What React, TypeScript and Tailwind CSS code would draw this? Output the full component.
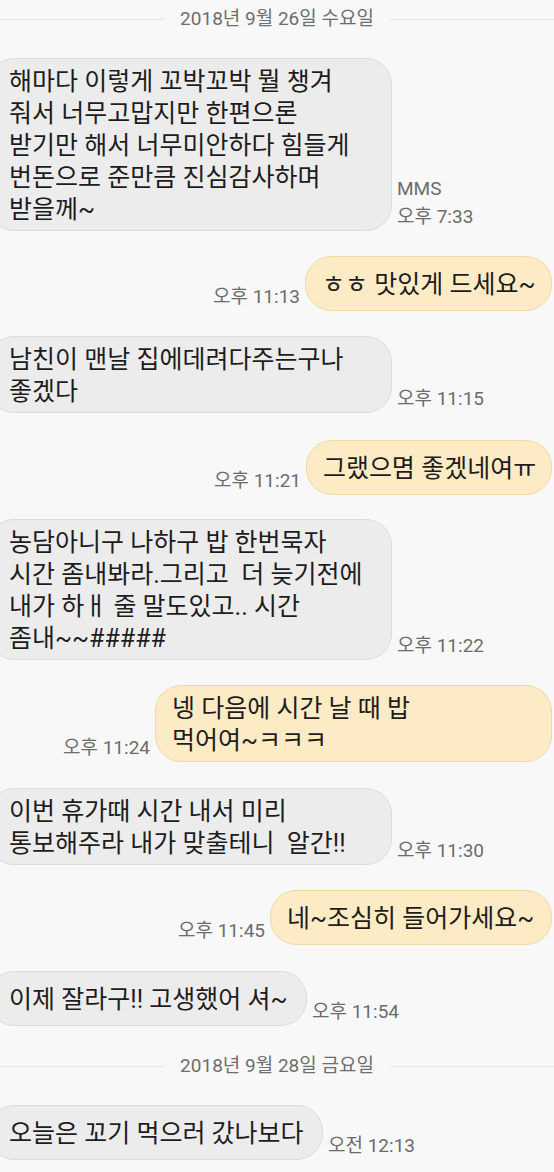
import React from "react";

const FONT = { fontFamily: "Roboto, 'Noto Sans CJK KR', sans-serif" };

interface DateLineProps {
  label: string;
  className: string;
}

const DateLine: React.FC<DateLineProps> = ({ label, className }) => (
  <div className={`flex h-[38px] items-center gap-[16px] ${className}`}>
    <div className="h-px flex-1 bg-[#e4e4e4]"></div>
    <span className="text-[19px] leading-[38px] text-[#6e6e6e]">{label}</span>
    <div className="h-px flex-1 bg-[#e4e4e4]"></div>
  </div>
);

interface BubbleProps {
  lines: string[];
  meta: string[];
  className: string;
  width: string;
}

const Received: React.FC<BubbleProps> = ({ lines, meta, className, width }) => (
  <div className={`flex items-end ${className}`}>
    <div
      className={`-ml-[12px] flex min-h-[55px] flex-col justify-center rounded-[26px] border border-[#dcdcdc] bg-[#ececec] pl-[20px] pr-3 pt-[7px] pb-[4px] ${width}`}
    >
      {lines.map((line) => (
        <div key={line} className="whitespace-pre text-[25px] leading-[32px] text-[#1d1d1d]">
          {line}
        </div>
      ))}
    </div>
    <div className="ml-[5px] flex flex-col">
      {meta.map((item) => (
        <span key={item} className="whitespace-nowrap text-[19px] leading-[28px] text-[#6c6c6c]">
          {item}
        </span>
      ))}
    </div>
  </div>
);

const Sent: React.FC<BubbleProps> = ({ lines, meta, className, width }) => (
  <div className={`flex items-end justify-end ${className}`}>
    <div className="mr-[5px] flex flex-col">
      {meta.map((item) => (
        <span key={item} className="whitespace-nowrap text-[19px] leading-[28px] text-[#6c6c6c]">
          {item}
        </span>
      ))}
    </div>
    <div
      className={`mr-[2px] flex min-h-[55px] flex-col justify-center rounded-[26px] border border-[#efd9a7] bg-[#fdebc5] pl-[16px] pr-3 pt-[7px] pb-[4px] ${width}`}
    >
      {lines.map((line) => (
        <div key={line} className="whitespace-pre text-[25px] leading-[32px] text-[#1d1d1d]">
          {line}
        </div>
      ))}
    </div>
  </div>
);

export default function App() {
  return (
    <div className="min-h-[1172px] w-full overflow-hidden bg-[#f8f8f8]" style={FONT}>
      <DateLine label="2018년 9월 26일 수요일" className="" />

      <Received
        className="mt-[20px]"
        width="w-[404px]"
        lines={[
          "해마다 이렇게 꼬박꼬박 뭘 챙겨",
          "줘서 너무고맙지만 한편으론",
          "받기만 해서 너무미안하다 힘들게",
          "번돈으로 준만큼 진심감사하며",
          "받을께~",
        ]}
        meta={["MMS", "오후 7:33"]}
      />

      <Sent
        className="mt-[25px]"
        width="w-[247px]"
        lines={["ㅎㅎ 맛있게 드세요~"]}
        meta={["오후 11:13"]}
      />

      <Received
        className="mt-[25px]"
        width="w-[404px]"
        lines={["남친이 맨날 집에데려다주는구나", "좋겠다"]}
        meta={["오후 11:15"]}
      />

      <Sent
        className="mt-[27px]"
        width="w-[246px]"
        lines={["그랬으몀 좋겠네여ㅠ"]}
        meta={["오후 11:21"]}
      />

      <Received
        className="mt-[24px]"
        width="w-[404px]"
        lines={[
          "농담아니구 나하구 밥 한번묵자",
          "시간 좀내봐라.그리고  더 늦기전에",
          "내가 하ㅐ 줄 말도있고.. 시간",
          "좀내~~#####",
        ]}
        meta={["오후 11:22"]}
      />

      <Sent
        className="mt-[25px]"
        width="w-[397px]"
        lines={["넹 다음에 시간 날 때 밥", "먹어여~ㅋㅋㅋ"]}
        meta={["오후 11:24"]}
      />

      <Received
        className="mt-[26px]"
        width="w-[404px]"
        lines={["이번 휴가때 시간 내서 미리", "통보해주라 내가 맞출테니  알간!!"]}
        meta={["오후 11:30"]}
      />

      <Sent
        className="mt-[25px]"
        width="w-[282px]"
        lines={["네~조심히 들어가세요~"]}
        meta={["오후 11:45"]}
      />

      <Received
        className="mt-[26px]"
        width="w-[319px]"
        lines={["이제 잘라구!! 고생했어 셔~"]}
        meta={["오후 11:54"]}
      />

      <DateLine label="2018년 9월 28일 금요일" className="mt-[21px]" />

      <Received
        className="mt-[20px]"
        width="w-[335px]"
        lines={["오늘은 꼬기 먹으러 갔나보다"]}
        meta={["오전 12:13"]}
      />
    </div>
  );
}
